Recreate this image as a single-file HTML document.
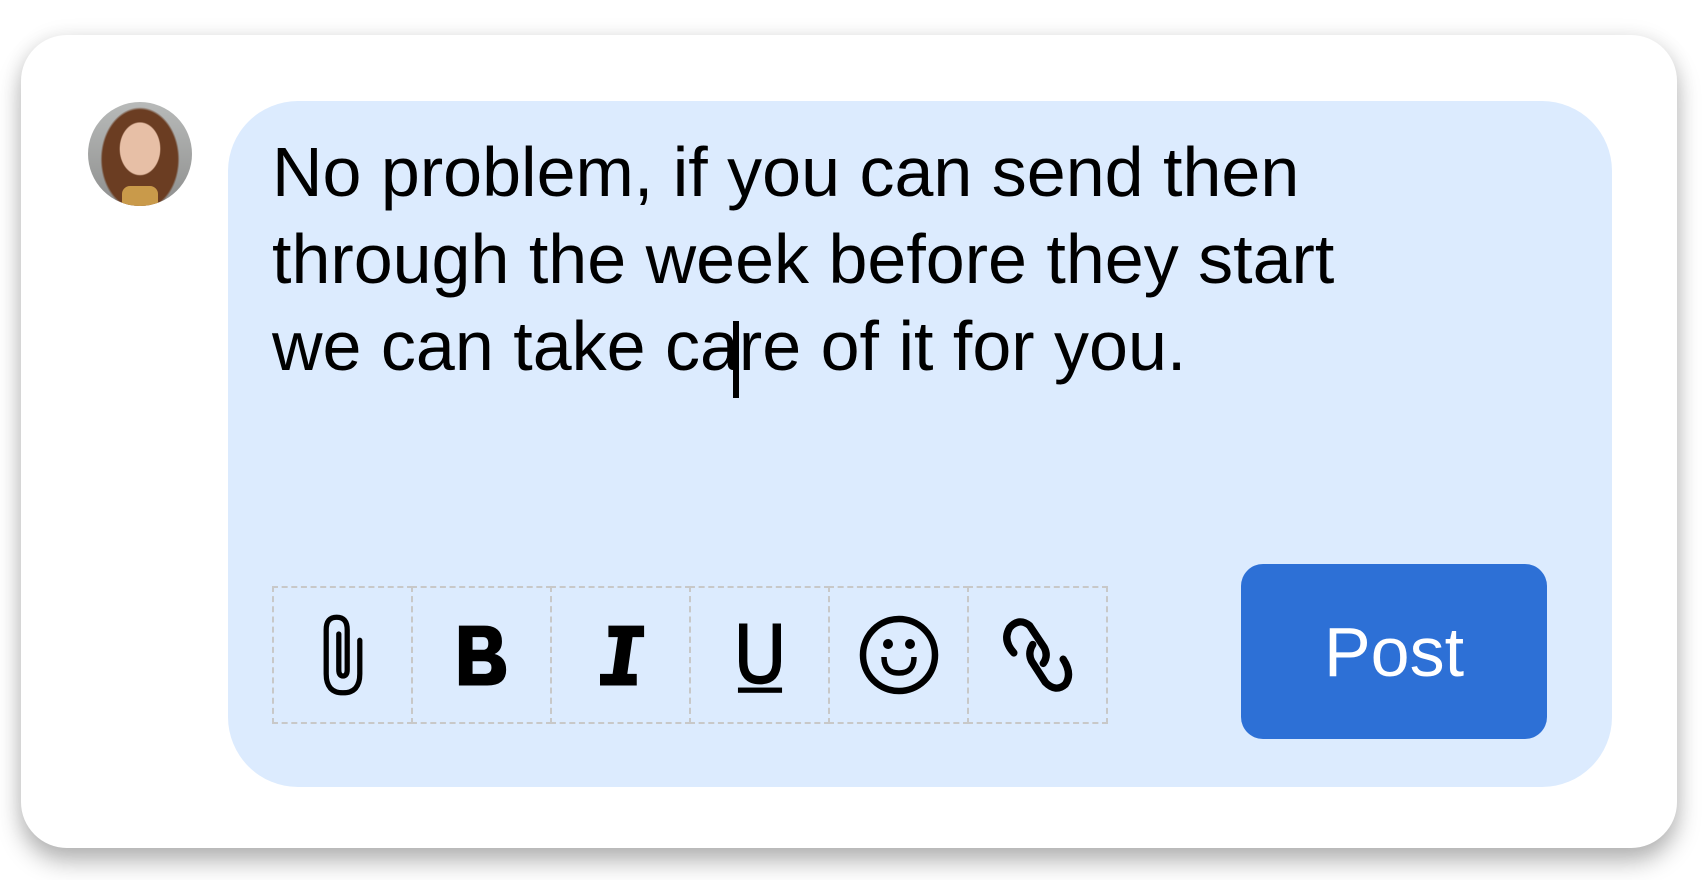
<!DOCTYPE html>
<html><head><meta charset="utf-8"><style>
html,body{margin:0;padding:0;background:#fff;width:1704px;height:880px;overflow:hidden;font-family:"Liberation Sans",Arial,sans-serif}
.card{position:absolute;left:21px;top:35px;width:1656px;height:813px;background:#fff;border-radius:46px;box-shadow:0 14px 24px rgba(0,0,0,0.28),0 0 20px rgba(0,0,0,0.08)}
.av{position:absolute;left:88px;top:102px;width:104px;height:104px;border-radius:50%;overflow:hidden;background:radial-gradient(ellipse 20% 26% at 50% 45%,#e7bfa6 0 95%,transparent 100%),radial-gradient(ellipse 38% 50% at 50% 55%,#6b3d22 0 95%,transparent 100%),linear-gradient(#b8bab9,#8e8f8e)}
.av:after{content:"";position:absolute;left:34px;top:84px;width:36px;height:26px;background:#c99a4a;border-radius:8px 8px 0 0}
.bub{position:absolute;left:228px;top:101px;width:1384px;height:686px;background:#dcebfe;border-radius:70px}
.txt{position:absolute;left:272px;top:129px;font-size:70px;line-height:87px;color:#000;white-space:nowrap}
.caret{position:absolute;left:733px;top:321px;width:6px;height:77px;background:#000}
.tb{position:absolute;left:272px;top:586px;display:flex}
.cell{width:141px;height:138px;box-sizing:border-box;border:2px dashed #c8c8c8;margin-left:-2px;display:flex;align-items:center;justify-content:center}
.cell:first-child{margin-left:0}
.btn{position:absolute;left:1241px;top:564px;width:306px;height:175px;background:#2d70d6;border-radius:22px;color:#fff;font-size:70px;display:flex;align-items:center;justify-content:center}
</style></head><body>
<div class="card"></div>
<div class="av"></div>
<div class="bub"></div>
<div class="txt">No problem, if you can send then<br>through the week before they start<br>we can take care of it for you.</div>
<div class="caret"></div>
<div class="tb">
<div class="cell"><svg width="84" height="84" viewBox="0 0 80 80"><path d="M56 26 V58 Q56 76 40 76 Q24 76 24 58 V16 Q24 4 34 4 Q44 4 44 16 V54 Q44 60 40 60 Q36 60 36 54 V20" fill="none" stroke="#000" stroke-width="5" stroke-linecap="round"/></svg></div>
<div class="cell"><svg width="84" height="84" viewBox="0 0 80 80"><path d="M18 12 H42 Q59 12 59 27 Q59 36 52 39 Q63 42 63 54 Q63 69 45 69 H18 Z M31 23 V35 H41 Q46 35 46 29 Q46 23 41 23 Z M31 46 V58 H42 Q49 58 49 52 Q49 46 42 46 Z" fill="#000" fill-rule="evenodd"/></svg></div>
<div class="cell"><svg width="84" height="84" viewBox="0 0 80 80"><path d="M28 12 H62 V23 H51 L46 58 H55 V69 H20 V58 H32 L37 23 H28 Z" fill="#000"/></svg></div>
<div class="cell"><svg width="84" height="84" viewBox="0 0 80 80"><path d="M24 10 V46 Q24 64 40 64 Q56 64 56 46 V10" fill="none" stroke="#000" stroke-width="8"/><rect x="19" y="71" width="42" height="5" fill="#000"/></svg></div>
<div class="cell"><svg width="84" height="84" viewBox="0 0 84 84"><circle cx="42" cy="42" r="36" fill="none" stroke="#000" stroke-width="6.5"/><circle cx="31" cy="31" r="5" fill="#000"/><circle cx="53" cy="31" r="5" fill="#000"/><path d="M27 44 Q27 60 42 60 Q57 60 57 44" fill="none" stroke="#000" stroke-width="5.5"/></svg></div>
<div class="cell"><svg width="84" height="84" viewBox="0 0 80 80"><path d="M17 38 Q6 26 13 14 Q22 4 32 12 L46 33 Q50 41 45 48 M35 30 Q30 38 34 46 L47 66 Q57 76 66 68 Q73 58 64 44" fill="none" stroke="#000" stroke-width="7" stroke-linecap="round"/></svg></div>
</div>
<div class="btn">Post</div>
</body></html>
